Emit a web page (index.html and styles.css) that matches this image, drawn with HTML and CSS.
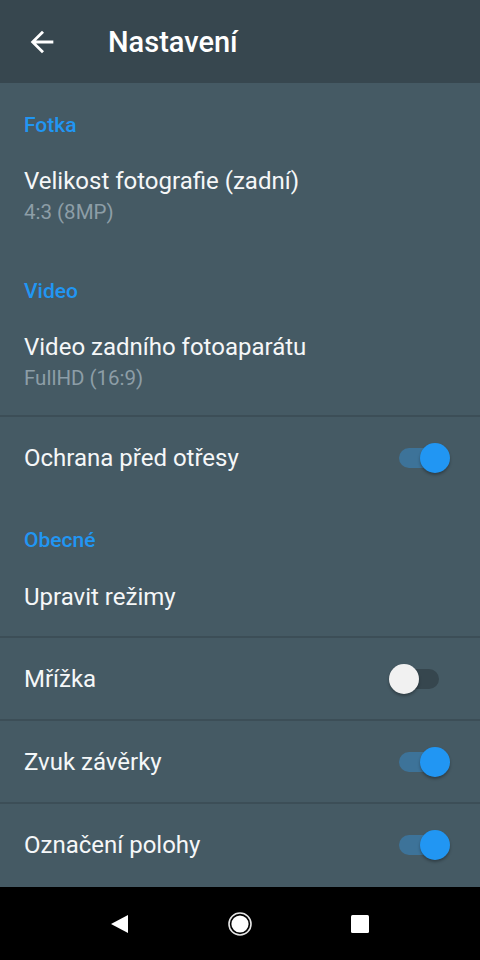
FILE: index.html
```html
<!DOCTYPE html>
<html lang="cs">
<head>
    <meta charset="UTF-8">
    <meta name="viewport" content="width=device-width, initial-scale=1.0">
    <title>Nastavení</title>
    <link rel="stylesheet" href="styles.css">
</head>
<body>
    <div class="screen">
        <div class="toolbar">
            <svg class="back" viewBox="0 0 24 24" width="34" height="34">
                <path fill="#fff" d="M20 11H7.83l5.59-5.59L12 4l-8 8 8 8 1.41-1.41L7.83 13H20v-2z"/>
            </svg>
            <h1>Nastavení</h1>
        </div>

        <div class="list">
            <div class="category">Fotka</div>
            <div class="item two-line">
                <div class="title">Velikost fotografie (zadní)</div>
                <div class="summary">4:3 (8MP)</div>
            </div>

            <div class="category">Video</div>
            <div class="item two-line">
                <div class="title">Video zadního fotoaparátu</div>
                <div class="summary">FullHD (16:9)</div>
            </div>
            <div class="divider"></div>
            <div class="item row">
                <div class="title">Ochrana před otřesy</div>
                <div class="switch on"><span class="track"></span><span class="thumb"></span></div>
            </div>

            <div class="category">Obecné</div>
            <div class="item row short">
                <div class="title">Upravit režimy</div>
            </div>
            <div class="divider"></div>
            <div class="item row">
                <div class="title">Mřížka</div>
                <div class="switch"><span class="track"></span><span class="thumb"></span></div>
            </div>
            <div class="divider"></div>
            <div class="item row">
                <div class="title">Zvuk závěrky</div>
                <div class="switch on"><span class="track"></span><span class="thumb"></span></div>
            </div>
            <div class="divider"></div>
            <div class="item row">
                <div class="title">Označení polohy</div>
                <div class="switch on"><span class="track"></span><span class="thumb"></span></div>
            </div>
        </div>

        <div class="navbar">
            <svg width="20" height="20" viewBox="0 0 20 20">
                <path fill="#fff" d="M18 1v18L1 10z"/>
            </svg>
            <svg width="26" height="26" viewBox="0 0 26 26">
                <circle cx="13" cy="13" r="11" fill="none" stroke="#e6e6e6" stroke-width="1.6"/>
                <circle cx="13" cy="13" r="8.6" fill="#fff"/>
            </svg>
            <svg width="20" height="20" viewBox="0 0 20 20">
                <rect x="1" y="1" width="18" height="18" rx="1.5" fill="#fff"/>
            </svg>
        </div>
    </div>
</body>
</html>
```

FILE: styles.css
```css
* {
    box-sizing: border-box;
}
body {
    margin: 0;
    background: #000;
    font-family: Roboto, "Noto Sans", sans-serif;
}
.screen {
    width: 480px;
    height: 960px;
    display: flex;
    flex-direction: column;
    background: #455a64;
}
.toolbar {
    height: 83px;
    flex-shrink: 0;
    display: flex;
    align-items: center;
    padding-left: 25px;
    background: #37474f;
}
.toolbar h1 {
    margin: 0 0 0 49px;
    font-size: 29px;
    font-weight: 500;
    color: #fff;
}
.back {
    display: block;
}
.list {
    flex: 1;
}
.category {
    height: 65px;
    padding: 30px 24px 0;
    font-size: 21px;
    line-height: 24px;
    font-weight: 500;
    color: #2196f3;
}
.item {
    padding: 0 30px 0 24px;
}
.title {
    font-size: 24px;
    line-height: 30px;
    color: #f5f7f8;
}
.summary {
    margin-top: 1px;
    font-size: 20.5px;
    line-height: 30px;
    color: #8d9ea7;
}
.two-line {
    height: 101px;
    padding-top: 18px;
}
.row {
    height: 81px;
    display: flex;
    align-items: center;
    justify-content: space-between;
    padding-top: 1px;
}
.row.short {
    height: 73px;
    padding-top: 0;
    padding-bottom: 6px;
}
.divider {
    height: 2px;
    background: #3c4e57;
}
.switch {
    position: relative;
    width: 61px;
    height: 30px;
}
.switch .track {
    position: absolute;
    left: 10px;
    top: 5px;
    width: 40px;
    height: 20px;
    border-radius: 10px;
    background: #36464e;
}
.switch .thumb {
    position: absolute;
    left: 0;
    top: 0;
    width: 30px;
    height: 30px;
    border-radius: 50%;
    background: #f1f1f1;
    box-shadow: 0 2px 3px rgba(0, 0, 0, 0.3);
}
.switch.on .track {
    background: #3d7399;
}
.switch.on .thumb {
    left: auto;
    right: 0;
    background: #2196f3;
}
.navbar {
    height: 73px;
    flex-shrink: 0;
    display: flex;
    align-items: center;
    justify-content: center;
    gap: 97px;
    background: #000;
}
.navbar svg {
    display: block;
}
```
